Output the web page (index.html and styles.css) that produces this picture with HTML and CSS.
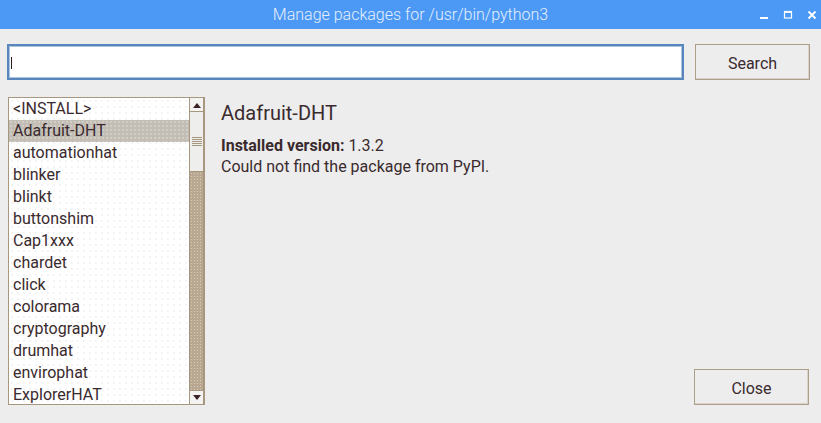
FILE: index.html
```html
<!DOCTYPE html>
<html>
<head>
<meta charset="utf-8">
<link rel="stylesheet" href="styles.css">
</head>
<body>
<div class="window">
  <div class="titlebar">
    <span class="title">Manage packages for /usr/bin/python3</span>
    <div class="controls">
      <svg class="ctl" width="10" height="10" viewBox="0 0 10 10"><rect x="1" y="7" width="8" height="2" fill="#fff"/></svg>
      <svg class="ctl" width="10" height="10" viewBox="0 0 10 10"><rect x="1.5" y="1.5" width="7" height="6.5" fill="none" stroke="#fff" stroke-width="1.2"/><rect x="1" y="1" width="8" height="2" fill="#fff"/></svg>
      <svg class="ctl" width="10" height="10" viewBox="0 0 10 10"><path d="M1.5 1.5 L8.5 8.5 M8.5 1.5 L1.5 8.5" stroke="#fff" stroke-width="1.8"/></svg>
    </div>
  </div>
  <div class="content">
    <div class="toprow">
      <div class="entry"><span class="caret"></span></div>
      <button class="btn search">Search</button>
    </div>
    <div class="mainrow">
      <div class="listbox">
        <ul class="items">
          <li>&lt;INSTALL&gt;</li>
          <li class="sel">Adafruit-DHT</li>
          <li>automationhat</li>
          <li>blinker</li>
          <li>blinkt</li>
          <li>buttonshim</li>
          <li>Cap1xxx</li>
          <li>chardet</li>
          <li>click</li>
          <li>colorama</li>
          <li>cryptography</li>
          <li>drumhat</li>
          <li>envirophat</li>
          <li>ExplorerHAT</li>
        </ul>
        <div class="scrollbar">
          <div class="arrow"><svg width="10" height="6" viewBox="0 0 10 6"><path d="M1 6 L5 1 L9 6 Z" fill="#3a2226"/></svg></div>
          <div class="thumb"><div class="grip"></div></div>
          <div class="trough"></div>
          <div class="arrow down"><svg width="10" height="6" viewBox="0 0 10 6"><path d="M1 0 L5 5 L9 0 Z" fill="#3a2226"/></svg></div>
        </div>
      </div>
      <div class="details">
        <h1 class="pkgname">Adafruit-DHT</h1>
        <p class="info"><b>Installed version:</b> 1.3.2</p>
        <p class="info">Could not find the package from PyPI.</p>
        <div class="spacer"></div>
        <div class="bottom">
          <button class="btn close">Close</button>
        </div>
      </div>
    </div>
  </div>
</div>
</body>
</html>
```

FILE: styles.css
```css
* { box-sizing: border-box; }
html, body {
  margin: 0;
  padding: 0;
  background: #ededed;
  font-family: Roboto, "Noto Sans", sans-serif;
  color: #3a2a2e;
}
.window {
  width: 821px;
  height: 423px;
  display: flex;
  flex-direction: column;
  background: #ededed;
}
.titlebar {
  height: 29px;
  background: #4c99f5;
  position: relative;
  display: flex;
  align-items: center;
  justify-content: center;
}
.title {
  color: #e4eefc;
  font-size: 16px;
  font-weight: 300;
  margin-top: -1px;
}
.controls {
  position: absolute;
  right: 4px;
  top: 10px;
  display: flex;
  gap: 14px;
}
.content {
  flex: 1;
  display: flex;
  flex-direction: column;
  padding: 15px 11px 18px 7px;
}
.toprow {
  display: flex;
  height: 36px;
  gap: 11px;
}
.entry {
  flex: 1;
  background: #fff;
  border: 2px solid #5a86bd;
  box-shadow: inset 0 0 0 1px #a9c3e3;
  position: relative;
}
.caret {
  position: absolute;
  left: 2px;
  top: 11px;
  width: 1px;
  height: 12px;
  background: #2a1a1e;
}
.btn {
  font-family: Roboto, "Noto Sans", sans-serif;
  font-size: 16px;
  color: #3a2a2e;
  background: #ededed;
  border: 1px solid #ad9e8a;
  box-shadow: inset -1px -1px 0 #d8d2c8;
  padding: 2px 0 0 0;
}
.search {
  width: 115px;
}
.mainrow {
  flex: 1;
  display: flex;
  margin-top: 17px;
  gap: 16px;
}
.listbox {
  width: 197px;
  height: 308px;
  margin-left: 1px;
  border: 1px solid #a8977f;
  border-right-width: 2px;
  background: #fff;
  display: flex;
}
.items {
  list-style: none;
  margin: 0;
  padding: 0;
  flex: 1;
  overflow: hidden;
  background-color: #fff;
  background-image: radial-gradient(circle, #e6e6e6 0.6px, transparent 0.8px);
  background-size: 6px 6px;
}
.items li {
  height: 22px;
  line-height: 22px;
  font-size: 16px;
  padding-left: 4px;
  white-space: nowrap;
}
.items li.sel {
  background-color: #c3beb5;
  background-image: radial-gradient(circle, #d9d6cf 0.6px, transparent 0.9px);
  background-size: 4px 4px;
}
.scrollbar {
  width: 14px;
  display: flex;
  flex-direction: column;
  border-left: 1px solid #a8977f;
  background: #eeeeec;
}
.arrow {
  height: 14px;
  display: flex;
  align-items: center;
  justify-content: center;
  border-bottom: 1px solid #a8977f;
  background: #f3f3f1;
}
.arrow.down {
  border-bottom: none;
  border-top: 1px solid #a8977f;
}
.thumb {
  height: 60px;
  background: #eeeeec;
  display: flex;
  align-items: center;
  justify-content: center;
  border-bottom: 1px solid #a8977f;
}
.grip {
  width: 10px;
  height: 9px;
  background: repeating-linear-gradient(#a8977f 0 1px, transparent 1px 2px);
}
.trough {
  flex: 1;
  background-color: #b9a891;
  background-image: radial-gradient(circle, #d8cbb6 0.6px, transparent 0.9px);
  background-size: 3px 3px;
}
.details {
  flex: 1;
  display: flex;
  flex-direction: column;
}
.pkgname {
  font-size: 20px;
  font-weight: 400;
  margin: 3px 0 0 0;
  line-height: 26px;
}
.info {
  font-size: 16px;
  margin: 0;
  line-height: 21px;
}
.pkgname + .info {
  margin-top: 9px;
}
.info b {
  font-weight: 700;
}
.spacer { flex: 1; }
.bottom {
  display: flex;
  justify-content: flex-end;
  margin-right: 1px;
}
.close {
  width: 115px;
  height: 36px;
}
```
